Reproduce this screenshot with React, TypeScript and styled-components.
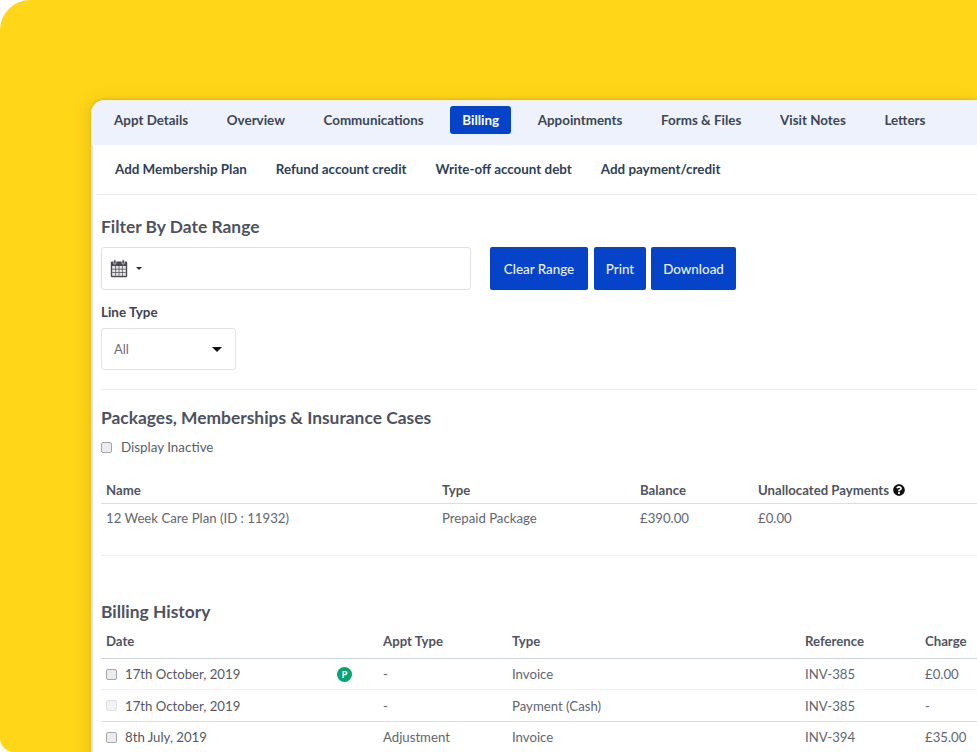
import React from "react";
import styled, { createGlobalStyle } from "styled-components";
import { FaQuestionCircle } from "react-icons/fa";

const Global = createGlobalStyle`
  html, body { margin: 0; padding: 0; background: #fff; }
  * { box-sizing: border-box; }
  body { font-family: Lato, "Open Sans", "Liberation Sans", sans-serif; }
`;

const Stage = styled.div`
  width: 977px;
  height: 752px;
  overflow: hidden;
  background: #ffd618;
  border-radius: 30px 0 0 14px;
  padding: 100px 0 0 91px;
`;

const Panel = styled.main`
  height: 700px;
  background: #fff;
  border-radius: 14px 0 0 0;
  box-shadow: -4px 0 14px rgba(170, 130, 0, 0.22), 0 -1px 2px rgba(120, 120, 160, 0.3), inset 2px 0 0 #dfe1ea;
  overflow: hidden;
`;

const TabBar = styled.nav`
  height: 45px;
  background: #eef2fc;
  display: flex;
  align-items: flex-start;
  padding: 6px 0 0 11px;
  gap: 14.6px;
`;

const Tab = styled.a<{ $active?: boolean }>`
  height: 28px;
  padding: 0 12px;
  display: flex;
  align-items: center;
  border-radius: 3px;
  font-size: 13.4px;
  font-weight: 700;
  white-space: nowrap;
  color: ${(p) => (p.$active ? "#fff" : "#3c4654")};
  background: ${(p) => (p.$active ? "#0544c8" : "transparent")};
`;

const ActionBar = styled.div`
  height: 50px;
  margin-left: 5px;
  padding: 0 0 1px 19px;
  display: flex;
  align-items: center;
  gap: 29px;
  border-bottom: 1px solid #e9ebf0;
`;

const Action = styled.a`
  font-size: 13.4px;
  font-weight: 700;
  color: #2f3f55;
  white-space: nowrap;
`;

const Content = styled.div`
  padding: 0 0 0 10px;
`;

const Heading = styled.h2<{ $top: number }>`
  margin: ${(p) => p.$top}px 0 0;
  font-size: 17.4px;
  line-height: 22px;
  font-weight: 700;
  color: #4d5260;
`;

const FilterRow = styled.div`
  margin-top: 9px;
  display: flex;
  align-items: stretch;
  height: 43px;
`;

const DateInput = styled.div`
  width: 370px;
  border: 1px solid #dfdfe6;
  border-radius: 3px;
  display: flex;
  align-items: center;
  padding-left: 8px;
  gap: 8px;
  margin-right: 19px;
`;

const SmallCaret = styled.span`
  width: 0;
  height: 0;
  border-left: 3.5px solid transparent;
  border-right: 3.5px solid transparent;
  border-top: 3.5px solid #2e2e33;
`;

const ActionButton = styled.button<{ $width: number; $gap?: number }>`
  width: ${(p) => p.$width}px;
  margin-right: ${(p) => p.$gap ?? 0}px;
  border: none;
  border-radius: 2px;
  background: #0544c8;
  color: #eef2ff;
  font-family: inherit;
  font-size: 13.4px;
  font-weight: 500;
  padding: 0;
`;

const Label = styled.div`
  margin-top: 14px;
  font-size: 13.4px;
  line-height: 17px;
  font-weight: 700;
  color: #3e4450;
`;

const Select = styled.div`
  margin-top: 7px;
  width: 135px;
  height: 42px;
  border: 1px solid #e2e2e8;
  border-radius: 3px;
  padding: 0 13px 0 12px;
  display: flex;
  align-items: center;
  justify-content: space-between;
  font-size: 13px;
  color: #6b6f78;
`;

const SelectCaret = styled.span`
  width: 0;
  height: 0;
  border-left: 5px solid transparent;
  border-right: 5px solid transparent;
  border-top: 5px solid #111;
`;

const Divider = styled.hr<{ $top: number }>`
  margin: ${(p) => p.$top}px 0 0;
  border: none;
  border-top: 1px solid #eceef1;
`;

const CheckRow = styled.label`
  margin-top: 9px;
  display: flex;
  align-items: center;
  gap: 9px;
  height: 18px;
  font-size: 13.4px;
  color: #5a5e68;
`;

const Check = styled.span<{ $faint?: boolean }>`
  width: 11px;
  height: 11px;
  flex: none;
  border-radius: 2px;
  border: 1px solid ${(p) => (p.$faint ? "#e0e0e4" : "#a6a6ad")};
  background: ${(p) => (p.$faint ? "#f3f3f5" : "#ececef")};
`;

const Row = styled.div<{ $cols: string; $h: number; $line?: string; $lineW?: number }>`
  display: grid;
  grid-template-columns: ${(p) => p.$cols};
  height: ${(p) => p.$h}px;
  align-items: center;
  padding-left: 5px;
  border-bottom: ${(p) => (p.$line ? `${p.$lineW ?? 1}px solid ${p.$line}` : "none")};
`;

const HeadCell = styled.div<{ $indent?: number }>`
  font-size: 13.2px;
  font-weight: 700;
  color: #50545e;
  white-space: nowrap;
  display: flex;
  align-items: center;
  gap: 4px;
`;

const Cell = styled.div`
  font-size: 13.2px;
  color: #62666f;
  white-space: nowrap;
  display: flex;
  align-items: center;
  position: relative;
`;

const DateText = styled.span`
  margin-left: 8px;
  color: #55585f;
`;

const Badge = styled.span`
  position: absolute;
  left: 231px;
  top: 50%;
  margin-top: -7.5px;
  width: 15px;
  height: 15px;
  border-radius: 50%;
  background: #04a36f;
  color: #fff;
  font-size: 9px;
  font-weight: 900;
  display: flex;
  align-items: center;
  justify-content: center;
`;

const HelpIcon = styled(FaQuestionCircle)`
  width: 12px;
  height: 12px;
  color: #111;
`;

const CalendarIcon = () => (
  <svg width="18" height="19" viewBox="0 0 18 19" aria-hidden="true">
    <rect x="0.8" y="2.6" width="16.4" height="15.6" rx="1.2" fill="#4a4a50" />
    <rect x="2.2" y="7" width="13.6" height="9.8" fill="#e8e8ea" />
    <path d="M5.6 7v9.8M9 7v9.8M12.4 7v9.8M2.2 10.2h13.6M2.2 13.5h13.6" stroke="#55555a" strokeWidth="0.8" />
    <rect x="3.6" y="0.8" width="2.4" height="4.4" rx="1.2" fill="#4a4a50" stroke="#fff" strokeWidth="0.6" />
    <rect x="12" y="0.8" width="2.4" height="4.4" rx="1.2" fill="#4a4a50" stroke="#fff" strokeWidth="0.6" />
  </svg>
);

const tabs = ["Appt Details", "Overview", "Communications", "Billing", "Appointments", "Forms & Files", "Visit Notes", "Letters"];
const actions = ["Add Membership Plan", "Refund account credit", "Write-off account debt", "Add payment/credit"];
const planCols = "336px 198px 118px 1fr";
const billCols = "277px 129px 293px 120px 1fr";

const billing = [
  { date: "17th October, 2019", appt: "-", type: "Invoice", ref: "INV-385", charge: "£0.00", badge: true, h: 31, line: "#eff0f3", lineW: 1 },
  { date: "17th October, 2019", appt: "-", type: "Payment (Cash)", ref: "INV-385", charge: "-", faint: true, h: 32, line: "#d9dde6", lineW: 1 },
  { date: "8th July, 2019", appt: "Adjustment", type: "Invoice", ref: "INV-394", charge: "£35.00", h: 30 },
];

export default function App() {
  return (
    <Stage>
      <Global />
      <Panel>
        <TabBar>
          {tabs.map((t) => (
            <Tab key={t} $active={t === "Billing"}>{t}</Tab>
          ))}
        </TabBar>
        <ActionBar>
          {actions.map((a) => (
            <Action key={a}>{a}</Action>
          ))}
        </ActionBar>
        <Content>
          <Heading $top={21}>Filter By Date Range</Heading>
          <FilterRow>
            <DateInput>
              <CalendarIcon />
              <SmallCaret />
            </DateInput>
            <ActionButton $width={98} $gap={6}>Clear Range</ActionButton>
            <ActionButton $width={52} $gap={5}>Print</ActionButton>
            <ActionButton $width={85}>Download</ActionButton>
          </FilterRow>
          <Label>Line Type</Label>
          <Select>
            All
            <SelectCaret />
          </Select>
          <Divider $top={19} />
          <Heading $top={17}>Packages, Memberships &amp; Insurance Cases</Heading>
          <CheckRow>
            <Check />
            Display Inactive
          </CheckRow>
          <Row $cols={planCols} $h={27} $line="#d9dde6" style={{ marginTop: 21 }}>
            <HeadCell>Name</HeadCell>
            <HeadCell>Type</HeadCell>
            <HeadCell>Balance</HeadCell>
            <HeadCell>
              Unallocated Payments <HelpIcon />
            </HeadCell>
          </Row>
          <Row $cols={planCols} $h={28}>
            <Cell>12 Week Care Plan (ID : 11932)</Cell>
            <Cell>Prepaid Package</Cell>
            <Cell>£390.00</Cell>
            <Cell>£0.00</Cell>
          </Row>
          <Divider $top={23} />
          <Heading $top={45}>Billing History</Heading>
          <Row $cols={billCols} $h={36} $line="#cfd3e0">
            <HeadCell>Date</HeadCell>
            <HeadCell>Appt Type</HeadCell>
            <HeadCell>Type</HeadCell>
            <HeadCell>Reference</HeadCell>
            <HeadCell>Charge</HeadCell>
          </Row>
          {billing.map((r, i) => (
            <Row key={i} $cols={billCols} $h={r.h} $line={r.line} $lineW={r.lineW}>
              <Cell>
                <Check $faint={r.faint} />
                <DateText>{r.date}</DateText>
                {r.badge && <Badge>P</Badge>}
              </Cell>
              <Cell>{r.appt}</Cell>
              <Cell>{r.type}</Cell>
              <Cell>{r.ref}</Cell>
              <Cell>{r.charge}</Cell>
            </Row>
          ))}
        </Content>
      </Panel>
    </Stage>
  );
}
